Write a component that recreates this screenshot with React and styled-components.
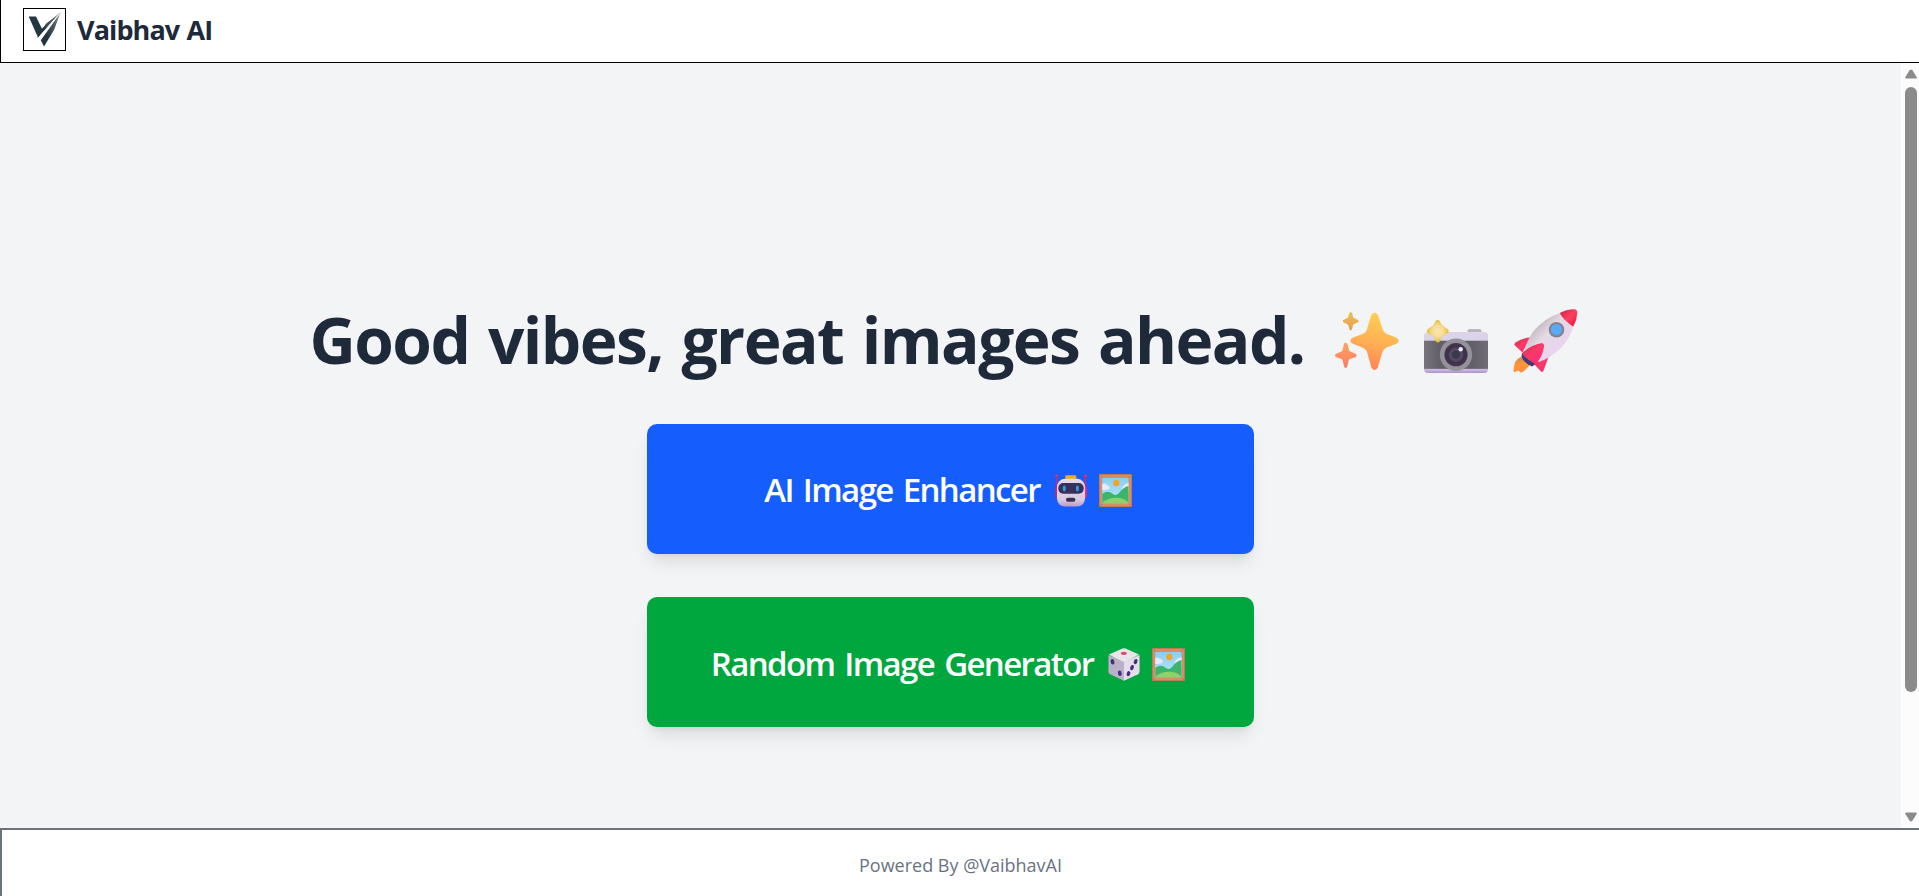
import React from 'react';
import styled, { createGlobalStyle } from 'styled-components';

const GlobalStyle = createGlobalStyle`
  * { box-sizing: border-box; }
  html, body { margin: 0; height: 100%; overflow: hidden; }
  body { font-family: "Segoe UI", "Open Sans", "Noto Sans", sans-serif; background: #fff; }
`;

const Page = styled.div`
  display: flex;
  flex-direction: column;
  height: 100vh;
  overflow: hidden;
`;

const Header = styled.header`
  flex: none;
  display: flex;
  align-items: flex-start;
  gap: 11px;
  height: 63px;
  padding: 8px 22px 0;
  background: #fff;
  border-left: 1px solid #000;
  border-bottom: 1px solid #000;
`;

const LogoBox = styled.div`
  width: 43px;
  height: 43px;
  border: 1px solid #000;
  svg { display: block; }
`;

const Brand = styled.span`
  font-size: 27px;
  font-weight: 700;
  line-height: 43px;
  letter-spacing: -0.9px;
  word-spacing: 1px;
  color: #1e2939;
  white-space: nowrap;
`;

const Middle = styled.div`
  flex: 1;
  min-height: 0;
  display: flex;
`;

const Main = styled.main`
  flex: 1;
  display: flex;
  flex-direction: column;
  align-items: center;
  padding-top: 241px;
  background: #f3f4f6;
`;

const Title = styled.h1`
  display: flex;
  align-items: center;
  margin: 0 0 48px;
  padding-right: 14px;
  height: 72px;
  font-size: 64px;
  font-weight: 700;
  line-height: 72px;
  letter-spacing: -1.55px;
  word-spacing: 3.5px;
  color: #1e2939;
  white-space: nowrap;
`;

const TitleIcons = styled.span`
  display: flex;
  gap: 25px;
  margin: 2px 0 0 30px;
`;

const Action = styled.button`
  display: flex;
  align-items: center;
  justify-content: center;
  width: 607px;
  height: 130px;
  margin: 0 0 43px;
  padding: ${(p) => p.$drop} 5px 0 0;
  border: 0;
  border-radius: 10px;
  background: ${(p) => p.$color};
  color: #fff;
  font-family: inherit;
  font-size: 33px;
  font-weight: 600;
  line-height: 44px;
  letter-spacing: ${(p) => p.$tracking};
  word-spacing: 3px;
  white-space: nowrap;
  box-shadow: 0 12px 18px -4px rgba(0, 0, 0, 0.1), 0 5px 7px -5px rgba(0, 0, 0, 0.1);
`;

const ActionIcons = styled.span`
  display: flex;
  gap: 12px;
  margin: 0 0 0 15px;
`;

const Scrollbar = styled.div`
  flex: none;
  display: flex;
  flex-direction: column;
  align-items: center;
  justify-content: space-between;
  width: 18px;
  padding: 6px 0 6px 2px;
  background: #fcfcfc;
`;

const Thumb = styled.div`
  width: 12px;
  height: 605px;
  margin: 8px 0 auto;
  border-radius: 6px;
  background: #8b8b8b;
`;

const Footer = styled.footer`
  flex: none;
  height: 68px;
  padding-top: 21px;
  background: #fff;
  border-top: 2px solid #6a7282;
  border-left: 2px solid #6a7282;
  color: #6a7282;
  font-size: 18px;
  line-height: 28px;
  text-align: center;
`;

const Logo = () => (
  <svg width="41" height="41" viewBox="1 1 41 41">
    <defs>
      <linearGradient id="wing" x1="1" y1="0" x2="0.3" y2="0.7">
        <stop offset="0" stopColor="#aab1b4" />
        <stop offset="0.45" stopColor="#536167" />
        <stop offset="1" stopColor="#22343f" />
      </linearGradient>
    </defs>
    <path d="M5.7 8.5H13L18.8 20.5L23 17.5L17.5 26.5L15 29.5Z" fill="#243742" />
    <path d="M37.8 4L23 15.8L16.8 25L14 30L23.5 20.2Z" fill="url(#wing)" />
    <path d="M37.8 4L31 22L21 38.6L17.8 32.2L25.5 21.5Z" fill="url(#wing)" />
    <path d="M36.5 6L25 18.5L18.5 27.5" stroke="#fff" strokeWidth="0.8" fill="none" />
  </svg>
);

const Sparkles = () => (
  <svg width="64" height="64" viewBox="0 0 64 64">
    <defs>
      <linearGradient id="spark" x1="0.6" y1="0" x2="0.4" y2="1">
        <stop offset="0" stopColor="#ffd052" />
        <stop offset="0.5" stopColor="#ffb154" />
        <stop offset="1" stopColor="#ff8357" />
      </linearGradient>
      <linearGradient id="sparkTop" x1="0" y1="0" x2="0" y2="1">
        <stop offset="0" stopColor="#eac158" />
        <stop offset="1" stopColor="#e79c4d" />
      </linearGradient>
      <linearGradient id="sparkLow" x1="0" y1="0" x2="0" y2="1">
        <stop offset="0" stopColor="#ffa45c" />
        <stop offset="1" stopColor="#f87c66" />
      </linearGradient>
    </defs>
    <path fill="url(#spark)" d="M36.2 6Q39.6 1.5 43 6L47.2 19Q48.5 23.5 52 25L61.5 28.8Q66 31.8 61.5 34.7L51.5 38.4Q48.5 39.6 47.2 43.5L42.8 58.5Q39.6 63.5 36.4 58.5L32.2 43.5Q31 39.7 27.2 38.4L17.5 34.5Q13 31.8 17.5 28.8L27.5 25Q31 23.6 32.2 19.5Z" />
    <path fill="url(#sparkTop)" d="M14.3 4Q15.7 2 17.1 4L18.2 8.5L22.6 10.8Q24.8 12 22.6 13.4L18.2 15.5L16.8 20.5Q15.7 22.3 14.6 20.5L13 15.5L8.7 13.4Q6.8 12 8.7 10.8L13 8.5Z" />
    <path fill="url(#sparkLow)" d="M9 34.8Q10.7 32.5 12.4 34.8L14.4 42L20.5 44.8Q23 46.5 20.5 48.2L14 50.2L12.2 57.8Q10.7 60.4 9.2 57.8L7.3 50.2L1.2 48.2Q-1.5 46.5 1.2 44.8L7.3 42Z" />
  </svg>
);

const Camera = () => (
  <svg width="64" height="64" viewBox="0 0 64 64">
    <defs>
      <linearGradient id="camBand" x1="0" y1="0" x2="1" y2="0">
        <stop offset="0" stopColor="#77747e" />
        <stop offset="0.25" stopColor="#625f69" />
        <stop offset="0.75" stopColor="#625f69" />
        <stop offset="1" stopColor="#706d76" />
      </linearGradient>
      <linearGradient id="camBase" x1="0" y1="0" x2="0" y2="1">
        <stop offset="0" stopColor="#dcd5e8" />
        <stop offset="0.9" stopColor="#d6c9e8" />
        <stop offset="1" stopColor="#a98dc8" />
      </linearGradient>
      <radialGradient id="camLens">
        <stop offset="0" stopColor="#3b3547" />
        <stop offset="0.35" stopColor="#41394e" />
        <stop offset="0.45" stopColor="#5b536b" />
        <stop offset="0.7" stopColor="#3c3149" />
        <stop offset="1" stopColor="#47334f" />
      </radialGradient>
      <radialGradient id="flash">
        <stop offset="0" stopColor="#fbe3b8" />
        <stop offset="0.5" stopColor="#f6dd94" />
        <stop offset="1" stopColor="#e2bd31" />
      </radialGradient>
    </defs>
    <path d="M43.5 24V22Q43.5 20 46 20H55Q57.5 20 57.5 22V24Z" fill="#b8b5bc" />
    <rect x="0" y="23" width="64" height="41" rx="4" fill="url(#camBase)" />
    <rect x="0" y="31.7" width="64" height="28.3" fill="url(#camBand)" />
    <path d="M0 60.3H64" stroke="#c9b5e2" strokeWidth="0.8" />
    <circle cx="32" cy="45.7" r="16.2" fill="#93929a" />
    <circle cx="32" cy="45.7" r="11.6" fill="url(#camLens)" />
    <circle cx="36.7" cy="40.3" r="2.2" fill="#eee9f2" />
    <path fill="url(#flash)" d="M11.7 12Q13.7 9.9 15.7 12Q17.5 17 23 19.4Q26.5 22 23 24.5Q17.5 26.5 16 32Q13.9 35 11.7 32Q10 26.5 4.5 24.5Q1.2 22.2 4.5 19.4Q9.8 17 11.7 12Z" />
  </svg>
);

const Rocket = () => (
  <svg width="65" height="64" viewBox="0 0 65 64">
    <defs>
      <linearGradient id="hull" x1="0.2" y1="0.2" x2="0.8" y2="0.8">
        <stop offset="0" stopColor="#b9b2b8" />
        <stop offset="0.4" stopColor="#e6dae4" />
        <stop offset="1" stopColor="#e9d2f2" />
      </linearGradient>
      <linearGradient id="nose" x1="0" y1="0" x2="1" y2="1">
        <stop offset="0" stopColor="#c91f42" />
        <stop offset="0.5" stopColor="#ff3f5d" />
        <stop offset="1" stopColor="#dc1746" />
      </linearGradient>
      <linearGradient id="fin" x1="0" y1="0" x2="1" y2="1">
        <stop offset="0" stopColor="#ce3154" />
        <stop offset="0.5" stopColor="#f93a68" />
        <stop offset="1" stopColor="#ff2483" />
      </linearGradient>
      <linearGradient id="flame" x1="0.2" y1="0" x2="0.5" y2="1">
        <stop offset="0" stopColor="#db8247" />
        <stop offset="0.5" stopColor="#ff963b" />
        <stop offset="1" stopColor="#ff8b3a" />
      </linearGradient>
    </defs>
    <path fill="url(#flame)" d="M8 48Q1 50 0.5 62Q1 64 4 62Q5.5 61 7 63Q9 64.5 11.5 61.5L17 56Z" />
    <path fill="#3b3c78" d="M9 44L23 55L19 57.5Q11 54 8.5 48Z" />
    <path fill="url(#fin)" d="M17 28.5Q9 29 2.5 33.5Q0.5 35 2.5 37L9.5 43.5Z" />
    <path fill="url(#fin)" d="M37 44L30.5 61.5Q29.5 64 27.5 62L21 55Z" />
    <path fill="url(#hull)" d="M47 4Q31 9 20 23Q14 31 12 42L26 53Q37 49 47 40Q57 30 60.5 17Z" />
    <path fill="url(#nose)" d="M46.8 4Q53 0.5 61 0.3Q64.5 0.5 64.3 4Q64 11 60.3 17.5Q51 12 46.8 4Z" />
    <circle cx="43.5" cy="20.7" r="7.8" fill="#85838f" />
    <circle cx="43.5" cy="20.7" r="5.5" fill="#5aaafb" />
    <path fill="url(#fin)" d="M29 34Q32 35 30.7 39Q29 49 22.5 55Q14 51 8.8 44.5Q17 36 29 34Z" />
  </svg>
);

const Robot = () => (
  <svg width="32" height="33" viewBox="0 0 32 33">
    <defs>
      <linearGradient id="face" x1="0" y1="0" x2="0" y2="1">
        <stop offset="0" stopColor="#e5dbe9" />
        <stop offset="0.75" stopColor="#d9cae2" />
        <stop offset="1" stopColor="#b89bcd" />
      </linearGradient>
    </defs>
    <path d="M1.5 2V13M30.4 2V13" stroke="#d82562" strokeWidth="1.3" />
    <circle cx="1.6" cy="1.8" r="1.5" fill="#f5245c" />
    <circle cx="30.3" cy="1.8" r="1.5" fill="#f5245c" />
    <rect x="0.2" y="12" width="4" height="12" rx="2" fill="#ca2a6b" />
    <rect x="27.8" y="12" width="4" height="12" rx="2" fill="#f22c77" />
    <rect x="10.3" y="1.2" width="11" height="5" rx="1.2" fill="#efaa2a" />
    <rect x="2" y="4.8" width="28" height="27.7" rx="8" fill="url(#face)" />
    <rect x="3.3" y="9" width="25.4" height="10.8" rx="5" fill="#39305a" />
    <ellipse cx="9.3" cy="14.4" rx="1.5" ry="3" fill="#2c9fe0" />
    <ellipse cx="22.4" cy="14.4" rx="1.5" ry="3" fill="#2c9fe0" />
    <rect x="11" y="23.7" width="9.4" height="4" rx="1.8" fill="#3b3253" />
  </svg>
);

const Picture = () => (
  <svg width="33" height="33" viewBox="0 0 33 33">
    <defs>
      <linearGradient id="sky" x1="0" y1="0" x2="0" y2="1">
        <stop offset="0" stopColor="#86cff4" />
        <stop offset="1" stopColor="#b9e8f9" />
      </linearGradient>
    </defs>
    <rect width="33" height="33" fill="#bd7c56" />
    <rect x="1" y="1" width="31" height="31" fill="#d98d60" />
    <path d="M0 0L4 4M33 0L29 4M0 33L4 29M33 33L29 29" stroke="#ad704c" strokeWidth="0.7" />
    <rect x="3.3" y="4" width="26.2" height="25.3" fill="url(#sky)" />
    <path d="M3.3 10Q6 8.7 8 11Q11 11.5 10.8 14.5Q8 16.3 3.3 16ZM29.5 9Q24.5 10 22.5 15L29.5 18Z" fill="#e9e9fb" />
    <circle cx="17.3" cy="9" r="3.2" fill="#f3a529" />
    <path d="M3.3 20Q8.5 15.5 14 20Q17 22.3 20 19Q24.5 12.8 29.5 12V29.3H3.3Z" fill="#3bb56c" />
    <path d="M3.3 28.5Q9 23.8 17 23.8Q25 23.8 29.5 28.5V29.3H3.3Z" fill="#8ed269" />
  </svg>
);

const Dice = () => (
  <svg width="32" height="33" viewBox="0 0 32 33">
    <path d="M14.5 0.5Q16 -0.2 17.5 0.5L31 6.5L16 15L0.8 6.5Z" fill="#e7e5e9" />
    <path d="M0.5 7L16 14V32.7L2 26.3Q0.5 25.5 0.4 23.5Z" fill="#bcb0c8" />
    <path d="M31.5 7L16 14V32.7L30 26.3Q31.5 25.5 31.6 23.5Z" fill="#e6dceb" />
    <ellipse cx="15.8" cy="5.3" rx="3" ry="1.6" fill="#dc4c69" />
    <g fill="#44317a">
      <ellipse cx="4.5" cy="13.8" rx="1.9" ry="2.8" transform="rotate(-12 4.5 13.8)" />
      <ellipse cx="11.8" cy="25.3" rx="1.9" ry="2.8" transform="rotate(-12 11.8 25.3)" />
      <ellipse cx="27.6" cy="13.6" rx="1.8" ry="2.7" transform="rotate(20 27.6 13.6)" />
      <ellipse cx="24" cy="19.6" rx="1.8" ry="2.7" transform="rotate(20 24 19.6)" />
      <ellipse cx="20.5" cy="25.7" rx="1.8" ry="2.7" transform="rotate(20 20.5 25.7)" />
    </g>
  </svg>
);

const Arrow = ({ down }) => (
  <svg width="12" height="10" viewBox="0 0 12 10">
    <path
      d={down ? 'M1 0.5H11Q12.3 1 11.5 2.3L7.4 8.7Q6 10.3 4.6 8.7L0.5 2.3Q-0.3 1 1 0.5Z' : 'M1 9.5H11Q12.3 9 11.5 7.7L7.4 1.3Q6 -0.3 4.6 1.3L0.5 7.7Q-0.3 9 1 9.5Z'}
      fill="#8b8b8b"
    />
  </svg>
);

export default function App() {
  return (
    <Page>
      <GlobalStyle />
      <Header>
        <LogoBox><Logo /></LogoBox>
        <Brand>Vaibhav AI</Brand>
      </Header>
      <Middle>
        <Main>
          <Title>
            Good vibes, great images ahead.
            <TitleIcons><Sparkles /><Camera /><Rocket /></TitleIcons>
          </Title>
          <Action $color="#155dfc" $tracking="-1.62px" $drop="2px">
            AI Image Enhancer
            <ActionIcons><Robot /><Picture /></ActionIcons>
          </Action>
          <Action $color="#00a63e" $tracking="-1.62px" $drop="4px">
            Random Image Generator
            <ActionIcons><Dice /><Picture /></ActionIcons>
          </Action>
        </Main>
        <Scrollbar>
          <Arrow />
          <Thumb />
          <Arrow down />
        </Scrollbar>
      </Middle>
      <Footer>Powered By @VaibhavAI</Footer>
    </Page>
  );
}
